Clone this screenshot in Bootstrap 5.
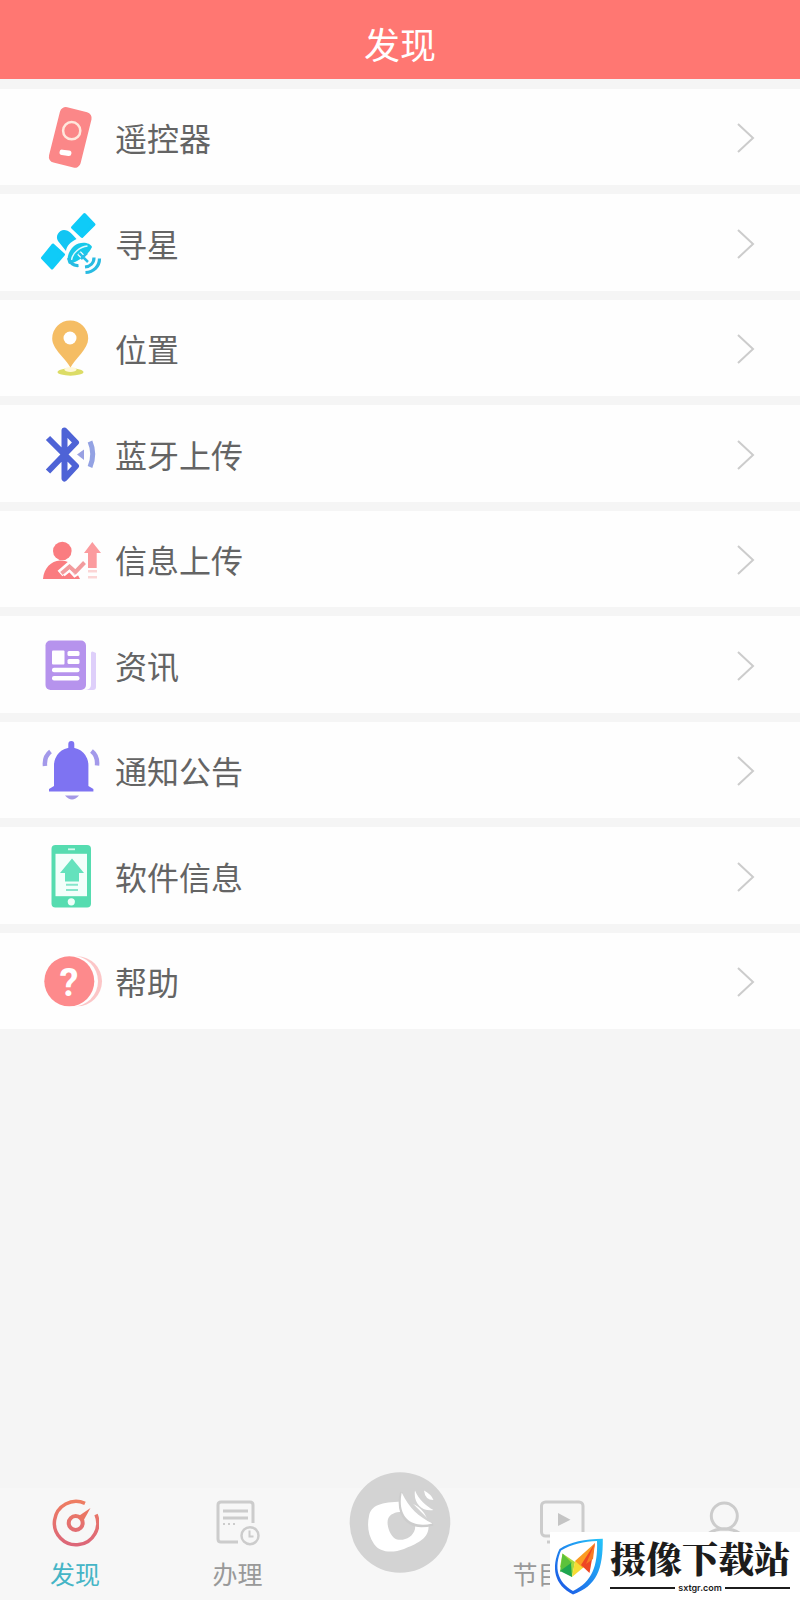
<!DOCTYPE html>
<html lang="zh-CN">
<head>
<meta charset="utf-8">
<meta name="viewport" content="width=device-width, initial-scale=1">
<title>发现</title>
<link rel="stylesheet" href="https://cdn.jsdelivr.net/npm/bootstrap@5.3.0/dist/css/bootstrap.min.css">
<style>
  body { background: #f5f5f5; font-family: "Noto Sans CJK SC", sans-serif; }
  .top-bar { background: #ff7772; height: 79px; padding-top: 19px; }
  .top-bar h1 { font-size: 36px; line-height: 48px; font-weight: 400; }
  .menu { margin-top: 10px; gap: 9px; }
  .menu-row { height: 96px; padding: 0 45px 0 38px; background: #fefefe; color: #646464; font-size: 32px; line-height: 40px; }
  li:nth-child(even) > .menu-row { height: 97px; }
  .menu-icon { width: 64px; height: 64px; margin-right: 13px; overflow: visible; }
  .arrow { width: 20px; height: 32px; }
  .tabs { background: #f7f7f7; height: 112px; padding: 11px 24px 0; }
  .tab { width: 102px; color: #999; font-size: 25px; line-height: 36px; }
  .tab.current { color: #45b5c6; }
  .tab svg { width: 48px; height: 48px; margin-bottom: 8px; }
  .tab .hub { width: 102px; height: 102px; margin-top: -27px; }
  .site-mark { width: 250px; height: 68px; background: #fff; color: #1c1c1c; }
  .site-mark svg { width: 56px; height: 68px; }
  .site-name { font-family: "Noto Serif CJK SC", "Noto Sans CJK SC", serif; font-weight: 900; font-size: 36px; line-height: 40px; margin-top: 6px; }
  .site-url { font-family: Inter, sans-serif; font-weight: 600; font-size: 9px; line-height: 12px; margin-top: 4px; gap: 3px; }
  .rule { height: 2px; background: #1c1c1c; }
</style>
</head>
<body>
<div class="d-flex flex-column min-vh-100">
  <header class="top-bar text-white text-center"><h1 class="mb-0">发现</h1></header>

  <main class="flex-grow-1">
    <ul class="menu list-unstyled d-flex flex-column mb-0">
      <li><a href="#" class="menu-row d-flex align-items-center text-decoration-none">
        <svg class="menu-icon" viewBox="0 0 64 64" aria-hidden="true"><g transform="rotate(14 32.5 32.5)"><rect x="16" y="4" width="32.500" height="57" rx="6" fill="#fb8788"/></g><circle cx="33.700" cy="25.700" r="8.600" fill="none" stroke="#ffe7dc" stroke-width="2.500"/><rect x="21.500" y="45" width="12" height="5.500" rx="2.700" fill="#fff" transform="rotate(8 27 47.5)"/></svg>
        <span class="flex-grow-1">遥控器</span>
        <svg class="arrow" viewBox="0 0 20 32" aria-hidden="true"><path d="M3 3l15 14L3 31" fill="none" stroke="#ccc" stroke-width="2"/></svg></a></li>

      <li><a href="#" class="menu-row d-flex align-items-center text-decoration-none">
        <svg class="menu-icon" viewBox="0 0 64 64" aria-hidden="true"><g fill="#0fcbf8" stroke="#0fcbf8" stroke-width="3" stroke-linejoin="round"><path d="M46.500 3.500L56 13.500L44 25.500L34.500 16.500z"/><path d="M15 34L25.500 43.500L14 57L4.500 47z"/></g><path d="M20 30c-3-5 1-11 6-11c5 0 9 5 12.500 9c-6 3-10 7-10.500 12z" fill="#12c5f3"/><path d="M54 36c-2-5-12-6-18-1s-8 14-5 18c6-1 20-9 23-17z" fill="#18c9ea"/><path d="M33.500 49c1-7 8-13 16-14" fill="none" stroke="#dffaff" stroke-width="1.500"/><path d="M41 42l9 9" stroke="#fff" stroke-width="5"/><path d="M41 42l9 9M43 48l6-6" stroke="#27bfe8" stroke-width="2.500"/><g fill="none" stroke="#28bbe2" stroke-width="3.200"><path d="M30.500 47c2 6 5 8 10 7.500"/><path d="M56 46.500c0 5.500-4 9-9 9.500"/><path d="M61.500 47.500c0 8-6 13.500-14 14"/></g></svg>
        <span class="flex-grow-1">寻星</span>
        <svg class="arrow" viewBox="0 0 20 32" aria-hidden="true"><path d="M3 3l15 14L3 31" fill="none" stroke="#ccc" stroke-width="2"/></svg></a></li>

      <li><a href="#" class="menu-row d-flex align-items-center text-decoration-none">
        <svg class="menu-icon" viewBox="0 0 64 64" aria-hidden="true"><ellipse cx="32.500" cy="56" rx="13" ry="3.700" fill="#dcdc66"/><ellipse cx="32.500" cy="53.500" rx="6" ry="2.500" fill="#fff8d8"/><path d="M32.500 51.500C28 43 14.200 33 14.200 22.500a18 18 0 0 1 36 0C50.200 33 37 43 32.500 51.500z" fill="#f5bd64"/><circle cx="32" cy="22" r="6.500" fill="#fff"/></svg>
        <span class="flex-grow-1">位置</span>
        <svg class="arrow" viewBox="0 0 20 32" aria-hidden="true"><path d="M3 3l15 14L3 31" fill="none" stroke="#ccc" stroke-width="2"/></svg></a></li>

      <li><a href="#" class="menu-row d-flex align-items-center text-decoration-none">
        <svg class="menu-icon" viewBox="0 0 64 64" aria-hidden="true"><path d="M10 16L38 44L26.500 56.500V8.500L38 20.500L10 49.500" fill="none" stroke="#4e63d6" stroke-width="6" stroke-linejoin="round"/><path d="M39 32.500l7-5v10.500z" fill="#98a0e2"/><path d="M52 19.500q5.500 12.500 0 25.500" fill="none" stroke="#93a2e3" stroke-width="5"/></svg>
        <span class="flex-grow-1">蓝牙上传</span>
        <svg class="arrow" viewBox="0 0 20 32" aria-hidden="true"><path d="M3 3l15 14L3 31" fill="none" stroke="#ccc" stroke-width="2"/></svg></a></li>

      <li><a href="#" class="menu-row d-flex align-items-center text-decoration-none">
        <svg class="menu-icon" viewBox="0 0 64 64" aria-hidden="true"><circle cx="24.300" cy="24" r="9.300" fill="#fa7c80"/><path d="M5 52C6 41 13 34 22 33.500c7 0 13 3 15 9l5 9.500z" fill="#fa7c80"/><path d="M22 46.500L31.500 38.500L37.500 43.500L47 34.500" fill="none" stroke="#fefefe" stroke-width="7.500"/><path d="M23.500 46.500L31.500 39.700L37.500 45L46.500 35.500" fill="none" stroke="#f29b9d" stroke-width="4"/><path d="M26 48.500L31.500 44L36.500 49.500L42 46" fill="none" stroke="#fefefe" stroke-width="2"/><path d="M54.300 15L63 26H58.700V41H50V26H46z" fill="#fb9b9e"/><path d="M50 44.300h9M50 50.300h9" stroke="#fbd5d5" stroke-width="2.500"/></svg>
        <span class="flex-grow-1">信息上传</span>
        <svg class="arrow" viewBox="0 0 20 32" aria-hidden="true"><path d="M3 3l15 14L3 31" fill="none" stroke="#ccc" stroke-width="2"/></svg></a></li>

      <li><a href="#" class="menu-row d-flex align-items-center text-decoration-none">
        <svg class="menu-icon" viewBox="0 0 64 64" aria-hidden="true"><path d="M53 20q0-3 5 0V54q0 3-3 3H46q7 0 7-5z" fill="#decffa"/><rect x="7.500" y="7.500" width="40.500" height="49.500" rx="5" fill="#b693ed"/><g fill="#fff"><rect x="14" y="17.500" width="12.500" height="14" rx="1"/><rect x="29.500" y="18" width="12" height="5" rx="1.500"/><rect x="29.500" y="26" width="12" height="5" rx="1.500"/><rect x="14" y="34.800" width="27.500" height="4.500" rx="2"/><rect x="14" y="43" width="27.500" height="4.500" rx="2"/></g></svg>
        <span class="flex-grow-1">资讯</span>
        <svg class="arrow" viewBox="0 0 20 32" aria-hidden="true"><path d="M3 3l15 14L3 31" fill="none" stroke="#ccc" stroke-width="2"/></svg></a></li>

      <li><a href="#" class="menu-row d-flex align-items-center text-decoration-none">
        <svg class="menu-icon" viewBox="0 0 64 64" aria-hidden="true"><g fill="#7e73f2"><rect x="30.300" y="3" width="6" height="12" rx="3"/><path d="M16 48V27a17.200 17.200 0 0 1 34.400 0V48l5 3v2.500H11V51z"/></g><path d="M27 57.500h14q-7 8-14 0z" fill="#a599e6"/><g fill="none" stroke="#a399ea" stroke-width="4.500"><path d="M12.500 13.500q-6.500 5-5.500 14.500"/><path d="M53.500 13q6.500 5 5.500 14.500"/></g></svg>
        <span class="flex-grow-1">通知公告</span>
        <svg class="arrow" viewBox="0 0 20 32" aria-hidden="true"><path d="M3 3l15 14L3 31" fill="none" stroke="#ccc" stroke-width="2"/></svg></a></li>

      <li><a href="#" class="menu-row d-flex align-items-center text-decoration-none">
        <svg class="menu-icon" viewBox="0 0 64 64" aria-hidden="true"><rect x="13.500" y="1" width="39.500" height="62.500" rx="4" fill="#56dcb0"/><rect x="17.500" y="9.800" width="31.500" height="42.400" fill="#f3fffb"/><path d="M30 5.300h7" stroke="#d2f8ec" stroke-width="1.800"/><circle cx="33.300" cy="57.800" r="3.600" fill="#f0fffa"/><path d="M34 14.500L46 29H41V37.500H27V29H22z" fill="#65e2bd"/><path d="M28 40.700h12M28 46h12" stroke="#86e6cb" stroke-width="2"/></svg>
        <span class="flex-grow-1">软件信息</span>
        <svg class="arrow" viewBox="0 0 20 32" aria-hidden="true"><path d="M3 3l15 14L3 31" fill="none" stroke="#ccc" stroke-width="2"/></svg></a></li>

      <li><a href="#" class="menu-row d-flex align-items-center text-decoration-none">
        <svg class="menu-icon" viewBox="0 0 64 64" aria-hidden="true"><circle cx="39" cy="32.300" r="25" fill="#fcc6c7"/><circle cx="34.500" cy="32.300" r="25.500" fill="#fefefe"/><circle cx="31.300" cy="32.300" r="25" fill="#fd8a8c"/><text x="31" y="47" text-anchor="middle" font-family="Roboto, sans-serif" font-weight="700" font-size="38" fill="#fff">?</text></svg>
        <span class="flex-grow-1">帮助</span>
        <svg class="arrow" viewBox="0 0 20 32" aria-hidden="true"><path d="M3 3l15 14L3 31" fill="none" stroke="#ccc" stroke-width="2"/></svg></a></li>
    </ul>
  </main>

  <nav class="tabs d-flex justify-content-between align-items-start" aria-label="主导航">
    <a href="#" class="tab current d-flex flex-column align-items-center text-decoration-none" aria-current="page">
      <svg viewBox="0 0 48 48" aria-hidden="true"><defs><linearGradient id="dial" gradientUnits="userSpaceOnUse" x1="0" y1="2" x2="0" y2="46"><stop offset="0" stop-color="#ee7d62"/><stop offset="1" stop-color="#dc6679"/></linearGradient></defs><g fill="none" stroke="url(#dial)" stroke-width="3.500"><path d="M34 4.300A21.700 21.700 0 1 0 45 15.500"/><circle cx="24.700" cy="24" r="7" stroke-width="4"/></g><path d="M39.500 9L27 17.500L32 22.500z" fill="#ea7664"/></svg>
      <span>发现</span></a>
    <a href="#" class="tab d-flex flex-column align-items-center text-decoration-none">
      <svg viewBox="0 0 48 48" fill="none" stroke="#ccc" stroke-width="3" aria-hidden="true"><path d="M24 43H7q-3 0-3-3V6q0-3 3-3H36q3 0 3 3V24"/><path d="M9 12H34M9 19H34"/><path d="M9 25h13" stroke-width="2" stroke-dasharray="2 3"/><circle cx="36" cy="36.700" r="8.500" stroke-width="2.500"/><path d="M35.500 31.500V37.500H39.500" stroke-width="2"/></svg>
      <span>办理</span></a>
    <a href="#" class="tab" aria-label="首页">
      <svg class="hub" viewBox="0 0 102 102" aria-hidden="true"><circle cx="51" cy="50.500" r="50.300" fill="#d3d3d3"/><path fill-rule="evenodd" d="M20 44C22 33 32 30 53 29.700C70 30 80 43 79.500 56C79 67 67 72 55 77C44 81 31 81 25 72C19 63 18 53 20 44zM39 47C37 54 42 66 48 67.500C56 69 64 65 66 57C67 49 61 39 53 39.700C46 40 41 42 39 47z" fill="#fff"/><path d="M52.500 20C47 44 60 59 84 52" fill="#d3d3d3" stroke="#cdcdcd" stroke-width="3"/><path d="M52.700 20.500C48 44 61 57 83.500 51.500C70 45 60 36 52.700 20.500zM66 18.500C64 31 73 40 84.500 38C77 34 70 28 66 18.500zM75 18.500Q76 28 84.500 28Q82 22 75 18.500z" fill="#fff"/></svg></a>
    <a href="#" class="tab d-flex flex-column align-items-center text-decoration-none">
      <svg viewBox="0 0 48 48" fill="none" stroke="#ccc" stroke-width="3" aria-hidden="true"><rect x="2.500" y="3" width="41.500" height="34" rx="4"/><path d="M8 43H39"/><path d="M19 14V27L31.500 20.700z" fill="#c4c4c4" stroke="none"/></svg>
      <span>节目指南</span></a>
    <a href="#" class="tab d-flex flex-column align-items-center text-decoration-none" aria-label="我的">
      <svg viewBox="0 0 48 48" fill="none" stroke="#ccc" stroke-width="3" aria-hidden="true"><circle cx="23.300" cy="17" r="13"/><path d="M2 45C2 36 11 30 23.300 30S44.600 36 44.600 45"/></svg></a>
  </nav>
</div>

<div class="site-mark position-fixed bottom-0 end-0 d-flex">
  <svg viewBox="0 0 56 68" aria-hidden="true"><defs><linearGradient id="shield" x1="1" y1="0" x2="0" y2="1"><stop offset="0" stop-color="#25c5fa"/><stop offset="1" stop-color="#1b50e4"/></linearGradient></defs><path fill-rule="evenodd" d="M52.800 6.800C35 7 20 10 9.500 17C1 35 4 53 23 62.500C47 54 53 37 52.800 6.800zM47 9C48 34 42 50 23 59C7 50 4 35 11 18.500C22 12 34 9.500 47 9z" fill="url(#shield)"/><path d="M12.500 21.500L25 30L22 45L10 35z" fill="#a7d93f"/><path d="M12.500 21.500L10 40L22 31z" fill="#5cc23b"/><path d="M10 39L21 31L22 45z" fill="#1fa650"/><path d="M22 45L25 29L34 35z" fill="#f7dc34"/><path d="M45 11L25 29L33 36z" fill="#fb9b22"/><path d="M45 11L31 33L39.500 41z" fill="#ee4723"/><path d="M45 11L36 32L43 27z" fill="#f77b24"/></svg>
  <div class="d-flex flex-column ps-1">
    <span class="site-name text-nowrap">摄像下载站</span>
    <span class="site-url d-flex align-items-center"><span class="rule flex-grow-1"></span>sxtgr.com<span class="rule flex-grow-1"></span></span>
  </div>
</div>
<script src="https://cdn.jsdelivr.net/npm/bootstrap@5.3.0/dist/js/bootstrap.bundle.min.js"></script>
</body>
</html>
